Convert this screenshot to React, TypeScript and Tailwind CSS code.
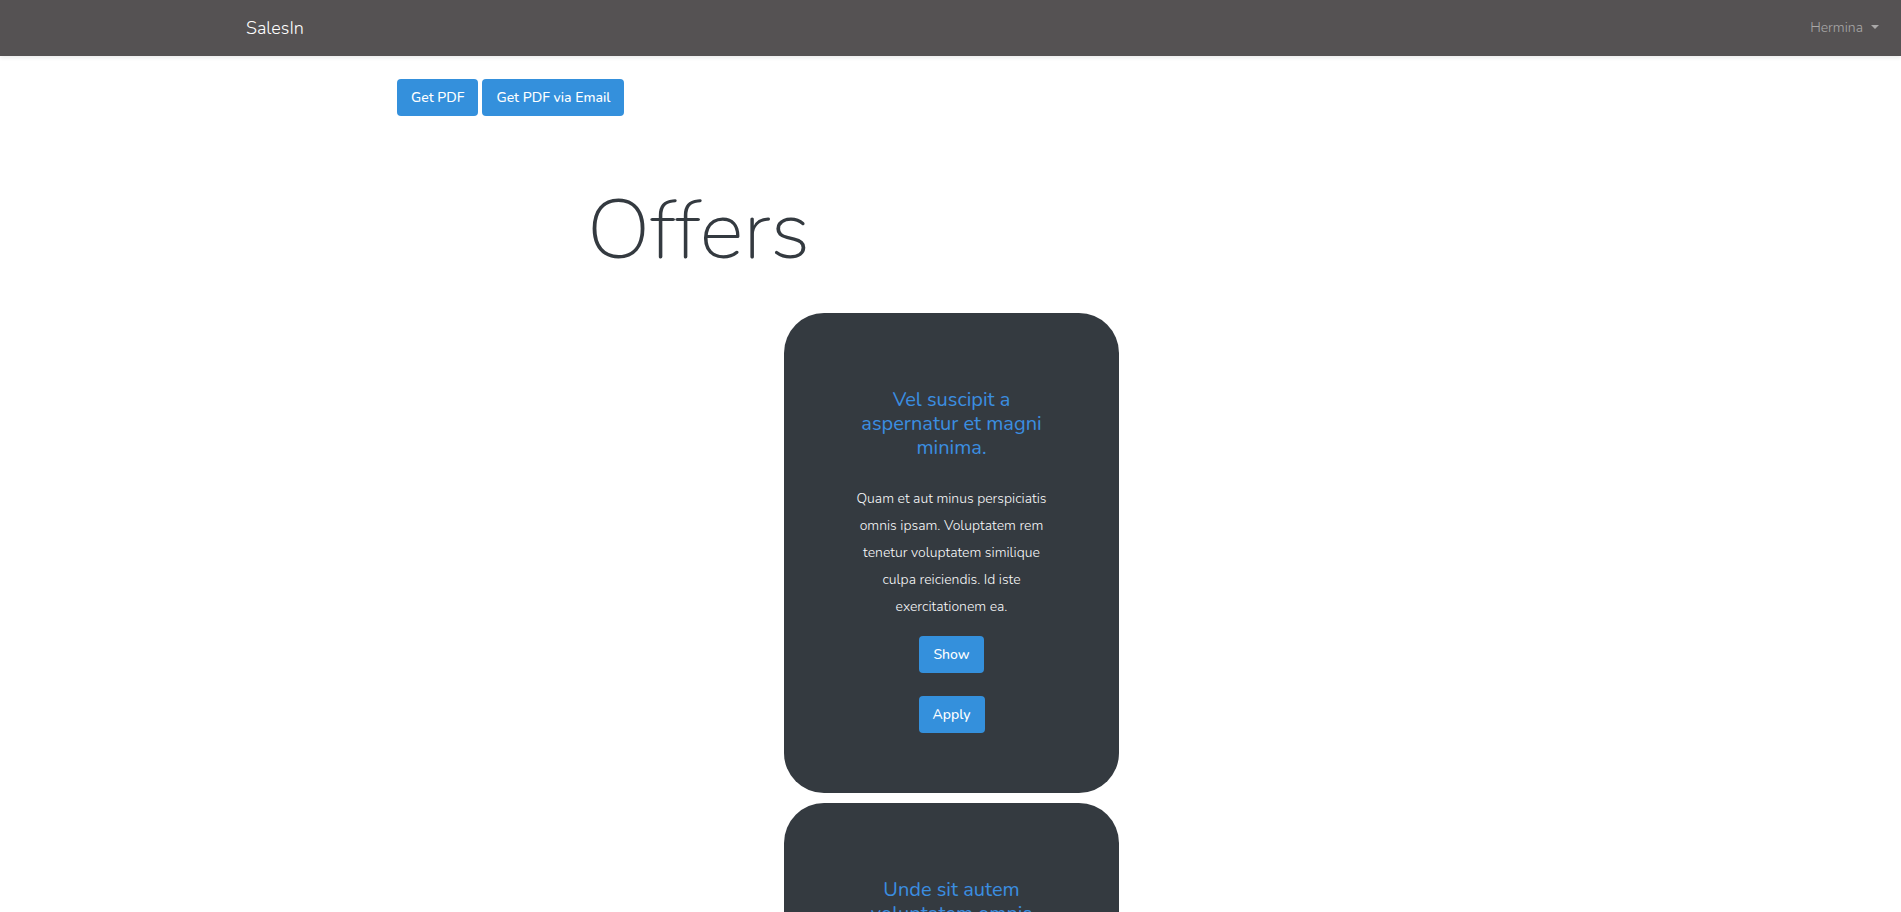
interface Offer {
  title: string;
  description?: string;
}

const offers: Offer[] = [
  {
    title: "Vel suscipit a aspernatur et magni minima.",
    description:
      "Quam et aut minus perspiciatis omnis ipsam. Voluptatem rem tenetur voluptatem similique culpa reiciendis. Id iste exercitationem ea.",
  },
  { title: "Unde sit autem voluptatem omnis" },
];

function Button({ label }: { label: string }) {
  return (
    <button
      type="button"
      className="h-[37px] rounded-[4px] bg-[#3490dc] px-3.5 text-[14px] leading-6 font-medium text-white hover:bg-[#227dc7]"
    >
      {label}
    </button>
  );
}

function OfferCard({ offer }: { offer: Offer }) {
  return (
    <article className="flex min-h-[480px] w-full max-w-[335px] flex-col items-center rounded-[40px] bg-[#343a40] px-[66px] pt-[75px] pb-[60px] text-center">
      <h2 className="text-[20px] leading-6 text-[#3b8ee0]">{offer.title}</h2>
      {offer.description && (
        <p className="mt-[25px] text-[14px] leading-[27px] font-light text-[#f8f9fa]">
          {offer.description}
        </p>
      )}
      <div className="mt-4 flex flex-col items-center gap-[23px]">
        <Button label="Show" />
        <Button label="Apply" />
      </div>
    </article>
  );
}

export default function App() {
  return (
    <div className="h-screen overflow-hidden bg-white font-['Nunito','Lato',sans-serif]">
      <nav className="flex h-14 items-center justify-between bg-[#555253] pr-[22px] pl-[246px] shadow-[0_2px_4px_rgba(0,0,0,0.08)]">
        <a href="#" className="text-[18px] leading-7 font-light text-white">
          SalesIn
        </a>
        <button
          type="button"
          aria-haspopup="menu"
          className="flex items-center gap-2 text-[14px] leading-6 font-light text-[#a9a8a8]"
        >
          Hermina
          <svg className="mb-0.5" width="8" height="4" viewBox="0 0 8 4" fill="currentColor" aria-hidden="true">
            <path d="M0 0h8L4 4z" />
          </svg>
        </button>
      </nav>
      <main className="mx-auto w-full max-w-[1111px] pt-[23px] pl-[2px]">
        <div className="flex gap-1">
          <Button label="Get PDF" />
          <Button label="Get PDF via Email" />
        </div>
        <h1 className="mt-[63px] pl-[190px] text-[84px] leading-[104px] font-thin text-[#343a40] [font-variant-ligatures:none]">
          Offers
        </h1>
        <section className="mt-[30px] flex flex-col items-center gap-[10px]">
          {offers.map((offer) => (
            <OfferCard key={offer.title} offer={offer} />
          ))}
        </section>
      </main>
    </div>
  );
}
